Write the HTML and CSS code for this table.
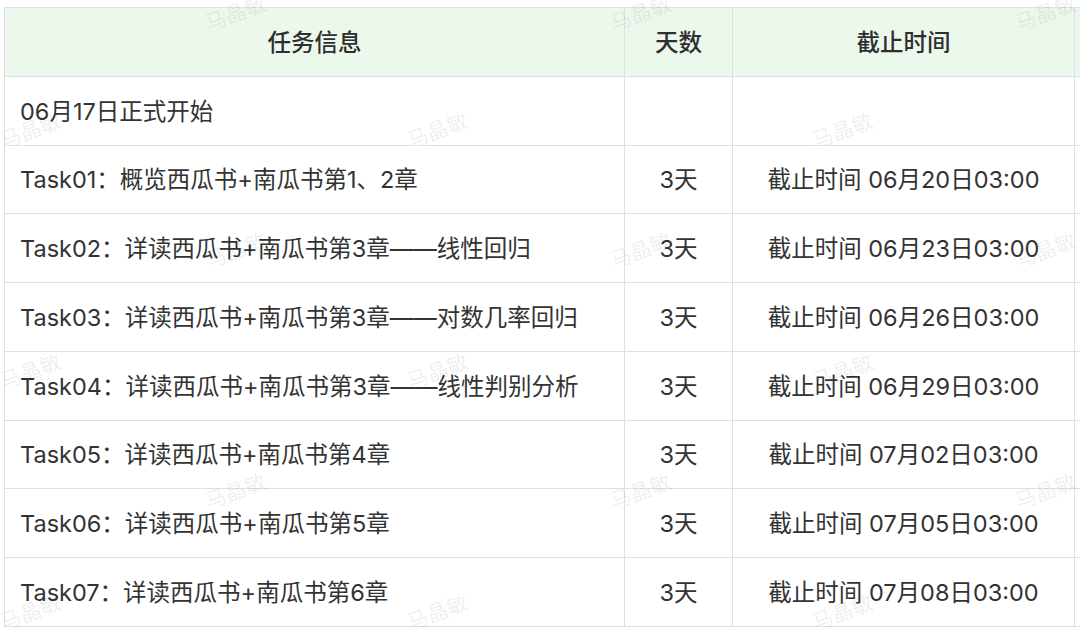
FILE: index.html
```html
<!DOCTYPE html>
<html lang="zh-CN">
<head>
<meta charset="utf-8">
<link rel="stylesheet" href="styles.css">
</head>
<body>
<div class="page">
  <table class="tasks">
    <colgroup>
      <col class="c-info">
      <col class="c-days">
      <col class="c-due">
      <col class="c-extra">
    </colgroup>
    <thead>
      <tr>
        <th>任务信息</th>
        <th>天数</th>
        <th>截止时间</th>
        <th></th>
      </tr>
    </thead>
    <tbody>
      <tr><td class="info">06月17日正式开始</td><td></td><td></td><td></td></tr>
      <tr><td class="info">Task01：概览西瓜书+南瓜书第1、2章</td><td>3天</td><td>截止时间 06月20日03:00</td><td></td></tr>
      <tr><td class="info">Task02：详读西瓜书+南瓜书第3章——线性回归</td><td>3天</td><td>截止时间 06月23日03:00</td><td></td></tr>
      <tr><td class="info">Task03：详读西瓜书+南瓜书第3章——对数几率回归</td><td>3天</td><td>截止时间 06月26日03:00</td><td></td></tr>
      <tr><td class="info">Task04：详读西瓜书+南瓜书第3章——线性判别分析</td><td>3天</td><td>截止时间 06月29日03:00</td><td></td></tr>
      <tr><td class="info">Task05：详读西瓜书+南瓜书第4章</td><td>3天</td><td>截止时间 07月02日03:00</td><td></td></tr>
      <tr><td class="info">Task06：详读西瓜书+南瓜书第5章</td><td>3天</td><td>截止时间 07月05日03:00</td><td></td></tr>
      <tr><td class="info">Task07：详读西瓜书+南瓜书第6章</td><td>3天</td><td>截止时间 07月08日03:00</td><td></td></tr>
    </tbody>
  </table>
  <div class="watermarks" aria-hidden="true">
    <span class="wm" style="left:235px;top:12px">马晶敏</span>
    <span class="wm" style="left:640px;top:12px">马晶敏</span>
    <span class="wm" style="left:1045px;top:12px">马晶敏</span>
    <span class="wm" style="left:30px;top:129px">马晶敏</span>
    <span class="wm" style="left:437px;top:129px">马晶敏</span>
    <span class="wm" style="left:842px;top:129px">马晶敏</span>
    <span class="wm" style="left:235px;top:249px">马晶敏</span>
    <span class="wm" style="left:640px;top:249px">马晶敏</span>
    <span class="wm" style="left:1045px;top:249px">马晶敏</span>
    <span class="wm" style="left:30px;top:370px">马晶敏</span>
    <span class="wm" style="left:437px;top:370px">马晶敏</span>
    <span class="wm" style="left:842px;top:370px">马晶敏</span>
    <span class="wm" style="left:235px;top:490px">马晶敏</span>
    <span class="wm" style="left:640px;top:490px">马晶敏</span>
    <span class="wm" style="left:1045px;top:490px">马晶敏</span>
    <span class="wm" style="left:30px;top:611px">马晶敏</span>
    <span class="wm" style="left:437px;top:611px">马晶敏</span>
    <span class="wm" style="left:842px;top:611px">马晶敏</span>
  </div>
</div>
</body>
</html>
```

FILE: styles.css
```css
html, body {
  margin: 0;
  padding: 0;
  background: #ffffff;
  overflow: hidden;
  width: 1080px;
  height: 635px;
}

.page {
  position: relative;
  width: 1080px;
  height: 635px;
  overflow: hidden;
  padding: 7px 0 0 4px;
  box-sizing: border-box;
  font-family: Inter, "Noto Sans CJK SC", sans-serif;
  color: #333333;
}

.tasks {
  border-collapse: collapse;
  table-layout: fixed;
  width: 1270px;
  font-size: 23.5px;
}

.c-info { width: 620px; }
.c-days { width: 108px; }
.c-due { width: 342px; }
.c-extra { width: 200px; }

.tasks th,
.tasks td {
  border: 1px solid #dfe0e5;
  height: 68.75px;
  padding: 0 15px 2px;
  text-align: center;
  vertical-align: middle;
  white-space: nowrap;
  box-sizing: border-box;
}

.tasks th {
  background: #edf8ed;
  font-weight: 500;
  color: #2f2f2f;
}

.tasks td.info {
  text-align: left;
}

.watermarks {
  position: absolute;
  inset: 0;
  pointer-events: none;
}

.wm {
  position: absolute;
  transform: translate(-50%, -50%) rotate(-20deg);
  font-family: "Noto Sans CJK SC", sans-serif;
  font-size: 21px;
  color: rgba(0, 0, 0, 0.08);
  white-space: nowrap;
}
```
